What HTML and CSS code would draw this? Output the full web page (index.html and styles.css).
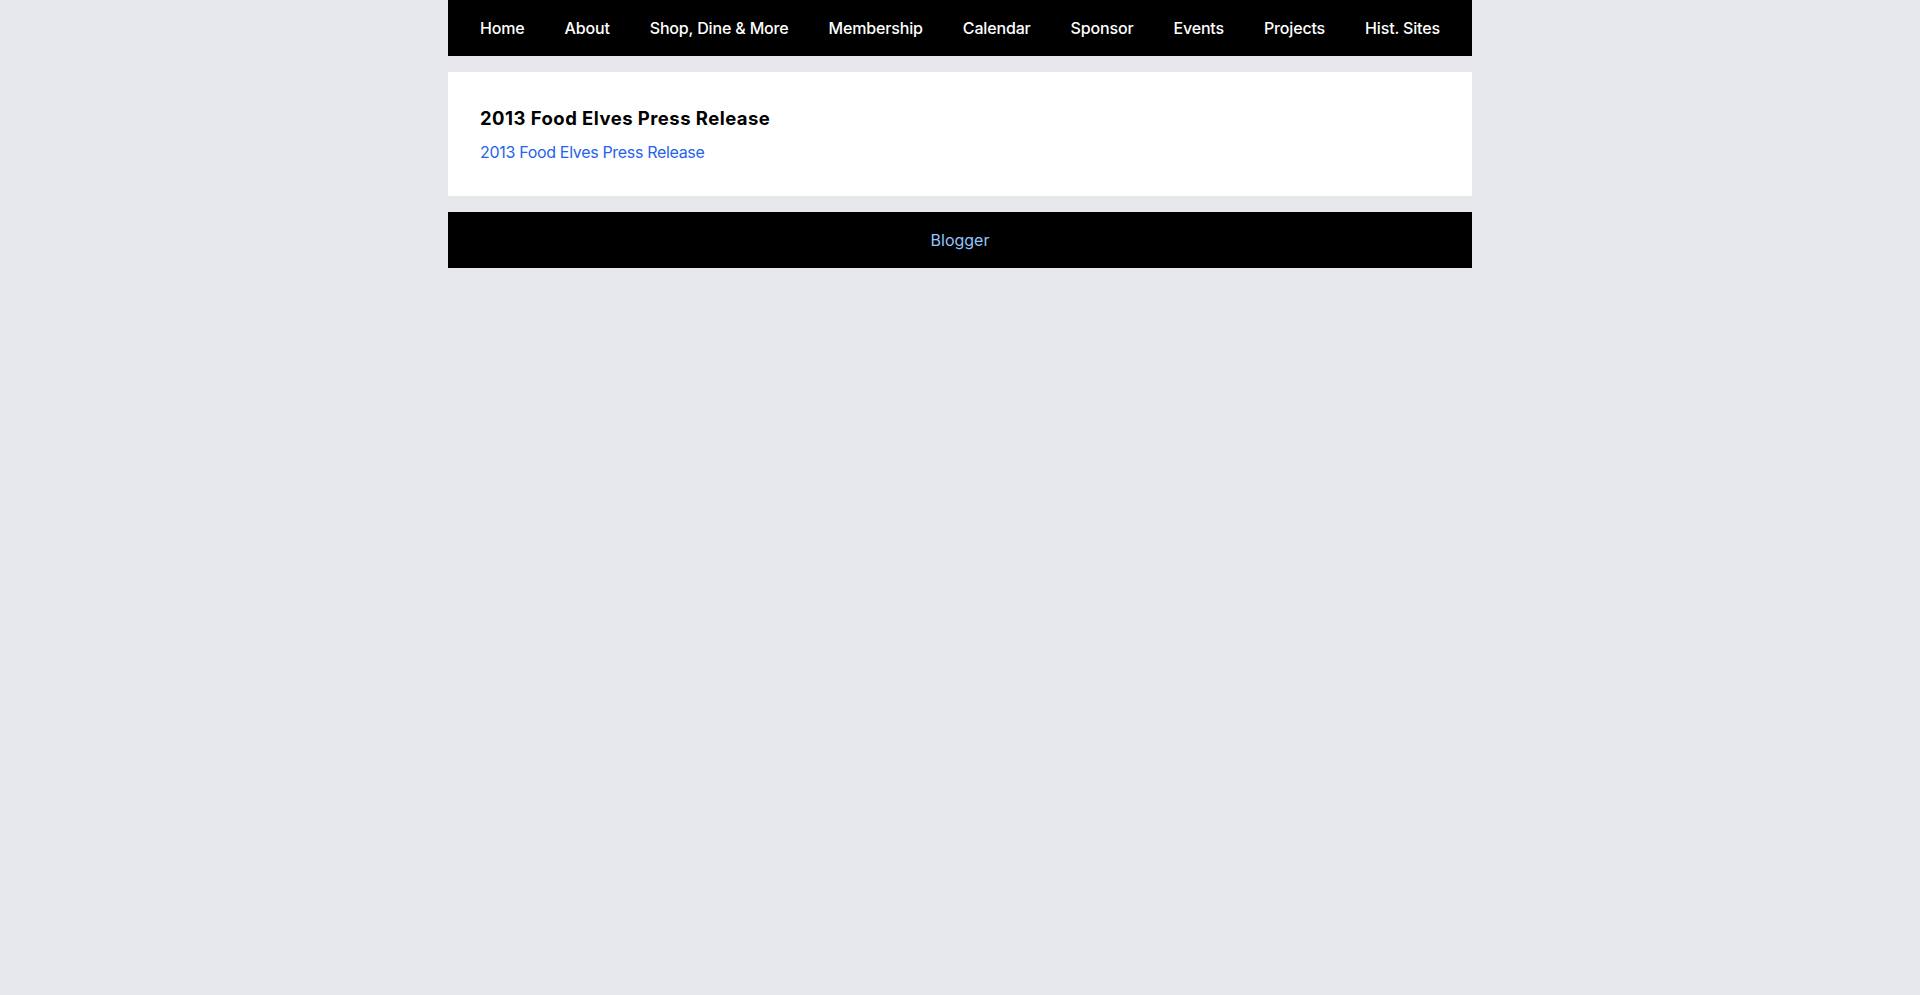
FILE: index.html
```html
<!DOCTYPE html>
<html lang="en">
<head>
<meta charset="utf-8">
<title>2013 Food Elves Press Release</title>
<link rel="stylesheet" href="styles.css">
</head>
<body>
<div class="page">
  <nav class="nav">
    <a href="#">Home</a>
    <a href="#">About</a>
    <a href="#">Shop, Dine &amp; More</a>
    <a href="#">Membership</a>
    <a href="#">Calendar</a>
    <a href="#">Sponsor</a>
    <a href="#">Events</a>
    <a href="#">Projects</a>
    <a href="#">Hist. Sites</a>
  </nav>
  <main class="card">
    <h1 class="title">2013 Food Elves Press Release</h1>
    <a class="link" href="#">2013 Food Elves Press Release</a>
  </main>
  <footer class="footer">
    <a href="#">Blogger</a>
  </footer>
</div>
</body>
</html>
```
FILE: styles.css
```css
html, body {
  margin: 0;
  padding: 0;
}
body {
  background: #e5e7eb;
  font-family: Inter, "Liberation Sans", Arial, sans-serif;
  font-size: 16px;
  line-height: 24px;
  color: #000;
}
.page {
  width: 1024px;
  margin: 0 auto;
}
.nav {
  background: #000;
  display: flex;
  justify-content: space-between;
  padding: 16px 32px;
}
.nav a {
  color: #fff;
  text-decoration: none;
  font-weight: 500;
  letter-spacing: -0.01em;
}
.card {
  display: block;
  background: #fff;
  margin-top: 16px;
  padding: 32px;
}
.title {
  margin: 0 0 8px 0;
  font-size: 18.5px;
  line-height: 28px;
  font-weight: 700;
  letter-spacing: 0.025em;
}
.link {
  color: #2563eb;
  text-decoration: none;
  letter-spacing: -0.02em;
}
.footer {
  background: #000;
  margin-top: 16px;
  padding: 16px 32px;
  text-align: center;
}
.footer a {
  color: #93c5fd;
  text-decoration: none;
}
```
